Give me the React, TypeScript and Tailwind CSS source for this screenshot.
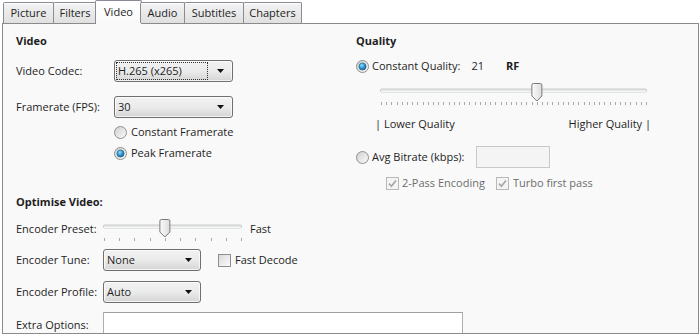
import React from 'react';

const tabs = [
  { label: 'Picture', w: 'w-[51px]' },
  { label: 'Filters', w: 'w-[44px]' },
  { label: 'Video', w: 'w-[47px]', active: true },
  { label: 'Audio', w: 'w-[45px]' },
  { label: 'Subtitles', w: 'w-[60px]' },
  { label: 'Chapters', w: 'w-[59px]' },
];

const Radio = ({ checked }: { checked?: boolean }) => (
  <svg width="13" height="13" viewBox="0 0 13 13" className="shrink-0">
    <defs>
      <linearGradient id="rbg" x1="0" y1="0" x2="1" y2="1">
        <stop offset="0" stopColor="#cfcfcf" />
        <stop offset="1" stopColor="#fbfbfb" />
      </linearGradient>
      <radialGradient id="rdot" cx="0.4" cy="0.35" r="0.7">
        <stop offset="0" stopColor="#8fe0ff" />
        <stop offset="0.6" stopColor="#2a8cc4" />
        <stop offset="1" stopColor="#145a88" />
      </radialGradient>
    </defs>
    <circle cx="6.5" cy="6.5" r="6" fill="url(#rbg)" stroke="#8e8f8f" />
    {checked && <circle cx="6.5" cy="6.5" r="3.6" fill="url(#rdot)" stroke="#1d5f8a" strokeWidth="0.6" />}
  </svg>
);

const Checkbox = ({ checked, disabled }: { checked?: boolean; disabled?: boolean }) => (
  <svg width="13" height="13" viewBox="0 0 13 13" className="shrink-0">
    <defs>
      <linearGradient id="cbg" x1="0" y1="0" x2="1" y2="1">
        <stop offset="0" stopColor="#d8d8d8" />
        <stop offset="1" stopColor="#fcfcfc" />
      </linearGradient>
    </defs>
    <rect x="0.5" y="0.5" width="12" height="12" fill={disabled ? '#f4f4f4' : 'url(#cbg)'} stroke={disabled ? '#b8b8b8' : '#8e8f8f'} />
    {checked && (
      <path d="M3 6.6 L5.4 9.2 L10 3.4" fill="none" stroke={disabled ? '#a6a6a6' : '#333'} strokeWidth="1.6" />
    )}
  </svg>
);

const Dropdown = ({ value, w, focus }: { value: string; w: string; focus?: boolean }) => (
  <div
    className={`${w} h-[22px] shrink-0 rounded-[3px] border border-[#707070] bg-gradient-to-b from-[#f2f2f2] via-[#ebebeb] to-[#d5d5d5] flex items-center pl-[2px] pr-[8px] shadow-[inset_0_0_0_1px_rgba(255,255,255,0.7)]`}
  >
    <span
      className={`flex-1 h-[16px] flex items-center pl-[1px] leading-[16px] whitespace-nowrap ${
        focus ? 'outline outline-1 outline-dotted outline-[#333] mr-[10px]' : ''
      }`}
    >
      {value}
    </span>
    <svg width="7" height="4" viewBox="0 0 7 4" className="ml-auto shrink-0">
      <path d="M0 0 H7 L3.5 4 Z" fill="#111" />
    </svg>
  </div>
);

const Slider = ({ width, ticks, pos }: { width: number; ticks: number; pos: number }) => {
  const step = (width - 3) / (ticks - 1);
  const tx = 1 + pos * step;
  return (
    <svg width={width} height="24" viewBox={`0 0 ${width} 24`} className="shrink-0 block">
      <defs>
        <linearGradient id="thumb" x1="0" y1="0" x2="1" y2="0">
          <stop offset="0" stopColor="#fbfbfb" />
          <stop offset="1" stopColor="#dcdcdc" />
        </linearGradient>
      </defs>
      <rect x="0.5" y="7" width={width - 2} height="3" rx="1" fill="#e7eaea" stroke="#c2c2c2" strokeWidth="0.8" />
      <line x1="1" y1="9.6" x2={width - 2} y2="9.6" stroke="#ffffff" strokeWidth="0.8" />
      {Array.from({ length: ticks }).map((_, i) => (
        <rect key={i} x={Math.round(1 + i * step)} y="20" width="1" height="3" fill="#a8a8a8" />
      ))}
      <path
        d={`M${tx - 5} 3 Q${tx - 5} 1.5 ${tx - 3.5} 1.5 H${tx + 3.5} Q${tx + 5} 1.5 ${tx + 5} 3 V14 L${tx} 19 L${tx - 5} 14 Z`}
        fill="url(#thumb)"
        stroke="#7a7a7a"
        strokeWidth="1"
      />
    </svg>
  );
};

export default function App() {
  return (
    <div className="w-[700px] h-[335px] bg-white overflow-hidden font-['Open_Sans',sans-serif] text-[11px] leading-[16px] text-[#1e1e1e] whitespace-nowrap">
      {/* Tab strip */}
      <div className="flex items-end h-[24px] pl-[3px] relative z-10">
        {tabs.map((t) =>
          t.active ? (
            <div
              key={t.label}
              className={`${t.w} -ml-[2px] -mr-[1px] h-[24px] border border-b-0 border-[#898c95] rounded-t-[2px] bg-gradient-to-b from-white to-[#f9f9f9] flex items-center justify-center pb-[1px]`}
            >
              {t.label}
            </div>
          ) : (
            <div
              key={t.label}
              className={`${t.w} -ml-px first:ml-0 h-[21px] mb-px border border-b-0 border-[#898c95] rounded-t-[2px] bg-gradient-to-b from-[#f3f3f3] to-[#e0e0e0] shadow-[inset_0_1px_0_#fff] flex items-center justify-center`}
            >
              {t.label}
            </div>
          )
        )}
      </div>

      {/* Panel */}
      <div className="ml-[2px] -mt-px w-[697px] h-[311px] border border-[#8a8a8a] bg-[#f9f9f9] overflow-hidden flex">
        {/* Left column */}
        <div className="w-[353px] pl-[13px] flex flex-col shrink-0">
          <div className="mt-[9px] font-bold">Video</div>
          <div className="mt-[11px] flex items-center h-[22px]">
            <span className="w-[98px] shrink-0">Video Codec:</span>
            <Dropdown value="H.265 (x265)" w="w-[119px]" focus />
          </div>
          <div className="mt-[14px] flex items-center h-[22px]">
            <span className="w-[98px] shrink-0">Framerate (FPS):</span>
            <Dropdown value="30" w="w-[119px]" />
          </div>
          <div className="mt-[6px] flex items-center h-[16px] pl-[98px] gap-[4px]">
            <Radio />
            <span>Constant Framerate</span>
          </div>
          <div className="mt-[5px] flex items-center h-[16px] pl-[98px] gap-[4px]">
            <Radio checked />
            <span>Peak Framerate</span>
          </div>

          <div className="mt-[33px] font-bold">Optimise Video:</div>
          <div className="mt-[4px] flex items-start h-[30px]">
            <span className="w-[87px] shrink-0 mt-[7px]">Encoder Preset:</span>
            <div className="mt-[4px]">
              <Slider width={140} ticks={10} pos={4} />
            </div>
            <span className="ml-[7px] mt-[7px]">Fast</span>
          </div>
          <div className="mt-[7px] flex items-center h-[22px]">
            <span className="w-[87px] shrink-0">Encoder Tune:</span>
            <Dropdown value="None" w="w-[98px]" />
            <div className="ml-[17px] flex items-center gap-[4px]">
              <Checkbox />
              <span>Fast Decode</span>
            </div>
          </div>
          <div className="mt-[10px] flex items-center h-[22px]">
            <span className="w-[87px] shrink-0">Encoder Profile:</span>
            <Dropdown value="Auto" w="w-[98px]" />
          </div>
          <div className="mt-[9px] flex items-start">
            <span className="w-[87px] shrink-0 mt-[5px]">Extra Options:</span>
            <div className="w-[360px] h-[30px] shrink-0 border border-[#abadb3] border-t-[#a0a0a0] bg-white" />
          </div>
        </div>

        {/* Right column */}
        <div className="flex-1 flex flex-col">
          <div className="mt-[9px] font-bold">Quality</div>
          <div className="mt-[9px] flex items-center h-[16px]">
            <Radio checked />
            <span className="ml-[3px]">Constant Quality:</span>
            <span className="ml-[11px]">21</span>
            <span className="ml-[22px] font-bold">RF</span>
          </div>
          <div className="mt-[8px] ml-[24px]">
            <Slider width={268} ticks={52} pos={30} />
          </div>
          <div className="mt-[10px] ml-[19px] w-[276px] flex justify-between h-[16px]">
            <span>| Lower Quality</span>
            <span>Higher Quality |</span>
          </div>
          <div className="mt-[14px] flex items-center h-[22px]">
            <Radio />
            <span className="ml-[3px]">Avg Bitrate (kbps):</span>
            <div className="ml-[11px] w-[74px] h-[22px] border border-[#c9c9c9] bg-[#f4f4f4]" />
          </div>
          <div className="mt-[7px] ml-[30px] flex items-center h-[16px] text-[#6d6d6d]">
            <Checkbox checked disabled />
            <span className="ml-[3px]">2-Pass Encoding</span>
            <span className="ml-[11px]">
              <Checkbox checked disabled />
            </span>
            <span className="ml-[4px]">Turbo first pass</span>
          </div>
        </div>
      </div>
    </div>
  );
}
